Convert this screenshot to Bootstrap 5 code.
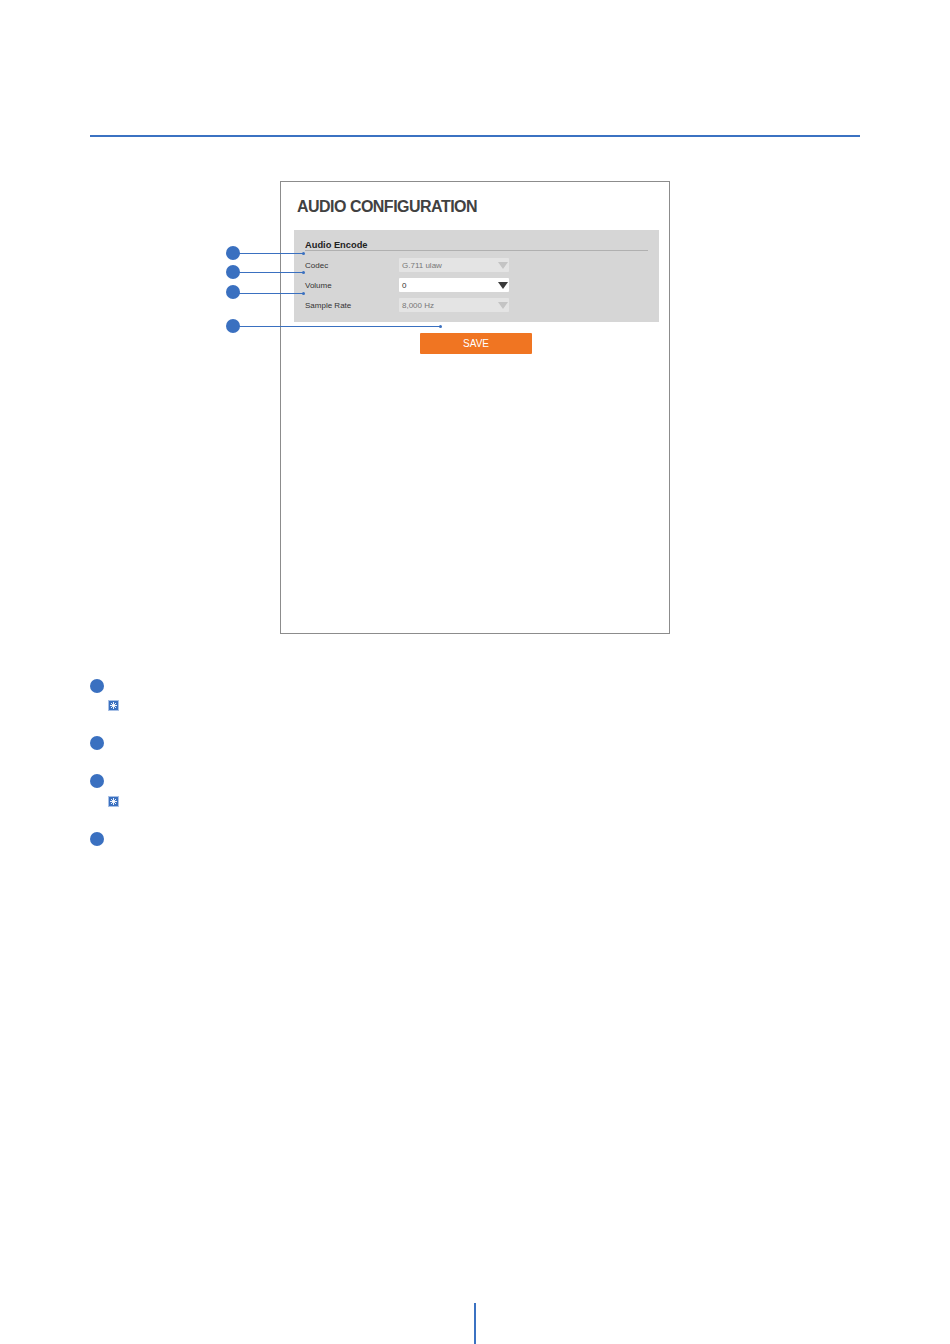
<!DOCTYPE html>
<html lang="en"><head><meta charset="utf-8"><title>Audio Configuration</title>
<link href="https://cdn.jsdelivr.net/npm/bootstrap@5.3.0/dist/css/bootstrap.min.css" rel="stylesheet">
<style>
html,body{margin:0;background:#fff}
body{font-family:"Liberation Sans",Arial,sans-serif}
.sheet{height:1344px;width:950px;padding-top:135px;overflow:hidden}
.head-rule{height:2px;margin:0 90px;background:#3b72c2}
.figure-wrap{position:relative;width:390px;height:453px;margin:44px 0 0 280px}
.frame-box{width:390px;height:453px;border:1px solid #8c8c8c;padding:0 10px 0 13px}
.frame-title{font-size:16px;line-height:18px;font-weight:700;color:#414141;margin:16px 0 14px 3px;letter-spacing:-.52px}
.grey-panel{height:92px;background:#d6d6d6;padding:10px 11px 0 11px}
.panel-head{font-size:9.3px;line-height:10px;font-weight:700;color:#222;border-bottom:1px solid #b0b0b0;margin-bottom:7px;height:11px}
.set-row{height:14px;margin-bottom:6px;font-size:8px;color:#333}
.set-label{width:94px;line-height:15px}
.sel-box{width:110px;height:14px;padding:0 0 0 3px;font-size:8px;line-height:14px;border:0;border-radius:1px;color:#777;background:#e4e4e4}
.sel-box span{padding-top:1px}
.sel-on{background:#fff;color:#333}
.tri{width:0;height:0;border-left:5px solid transparent;border-right:5px solid transparent;border-top:7px solid #c4c4c4;margin-right:1px}
.sel-on .tri{border-top-color:#3a3a3a}
.save-btn{display:block;width:112px;height:21px;margin:11px 0 0 126px;padding:0;border:0;border-radius:1px;background:#f07522;color:#fff;font-size:10px;line-height:20px}
.call-dot{position:absolute;left:-54px;width:14px;height:14px;border-radius:50%;background:#3a70c0}
.call-line{position:absolute;left:-47px;height:1px;background:#3a70c0}
.call-line::after{content:"";position:absolute;right:-1px;top:-1px;width:3px;height:3px;border-radius:50%;background:#3a70c0}
.cd1{top:65px}.cd2{top:84px}.cd3{top:104px}.cd4{top:138px}
.cl1{top:72px;width:71px}.cl2{top:91px;width:71px}.cl3{top:112px;width:71px}.cl4{top:145px;width:208px}
.notes{margin:45px 0 0 90px}
.num-dot{width:14px;height:14px;border-radius:50%;background:#3a70c0}
.note-mark{width:11px;height:11px;margin:7px 0 0 18px;display:block}
.note-low{margin-top:8px}
.gap-a{margin-top:25px}
.gap-b{margin-top:24px}
.gap-c{margin-top:25px}
.foot-rule{width:2px;height:41px;background:#3b72c2;margin:457px 0 0 474px}
</style></head>
<body>
<div class="sheet">
  <div class="head-rule"></div>
  <div class="figure-wrap">
    <div class="frame-box">
      <div class="frame-title">AUDIO CONFIGURATION</div>
      <div class="grey-panel">
        <div class="panel-head">Audio Encode</div>
        <div class="set-row d-flex"><div class="set-label">Codec</div><div class="sel-box d-flex justify-content-between align-items-center"><span>G.711 ulaw</span><i class="tri"></i></div></div>
        <div class="set-row d-flex"><div class="set-label">Volume</div><div class="sel-box sel-on d-flex justify-content-between align-items-center"><span>0</span><i class="tri"></i></div></div>
        <div class="set-row d-flex"><div class="set-label">Sample Rate</div><div class="sel-box d-flex justify-content-between align-items-center"><span>8,000 Hz</span><i class="tri"></i></div></div>
      </div>
      <button type="button" class="save-btn">SAVE</button>
    </div>
    <span class="call-dot cd1"></span><span class="call-line cl1"></span>
    <span class="call-dot cd2"></span><span class="call-line cl2"></span>
    <span class="call-dot cd3"></span><span class="call-line cl3"></span>
    <span class="call-dot cd4"></span><span class="call-line cl4"></span>
  </div>
  <div class="notes">
    <div class="num-dot"></div>
    <svg class="note-mark" viewBox="0 0 11 11"><rect x=".5" y=".5" width="10" height="10" fill="#3a70c0" stroke="#a9c1e6"/><g stroke="#fff" stroke-width=".9"><path d="M5.5 2v7M2 5.5h7M3 3l5 5M8 3l-5 5"/></g></svg>
    <div class="num-dot gap-a"></div>
    <div class="num-dot gap-b"></div>
    <svg class="note-mark note-low" viewBox="0 0 11 11"><rect x=".5" y=".5" width="10" height="10" fill="#3a70c0" stroke="#a9c1e6"/><g stroke="#fff" stroke-width=".9"><path d="M5.5 2v7M2 5.5h7M3 3l5 5M8 3l-5 5"/></g></svg>
    <div class="num-dot gap-c"></div>
  </div>
  <div class="foot-rule"></div>
</div>
<script src="https://cdn.jsdelivr.net/npm/bootstrap@5.3.0/dist/js/bootstrap.bundle.min.js"></script>
</body></html>
